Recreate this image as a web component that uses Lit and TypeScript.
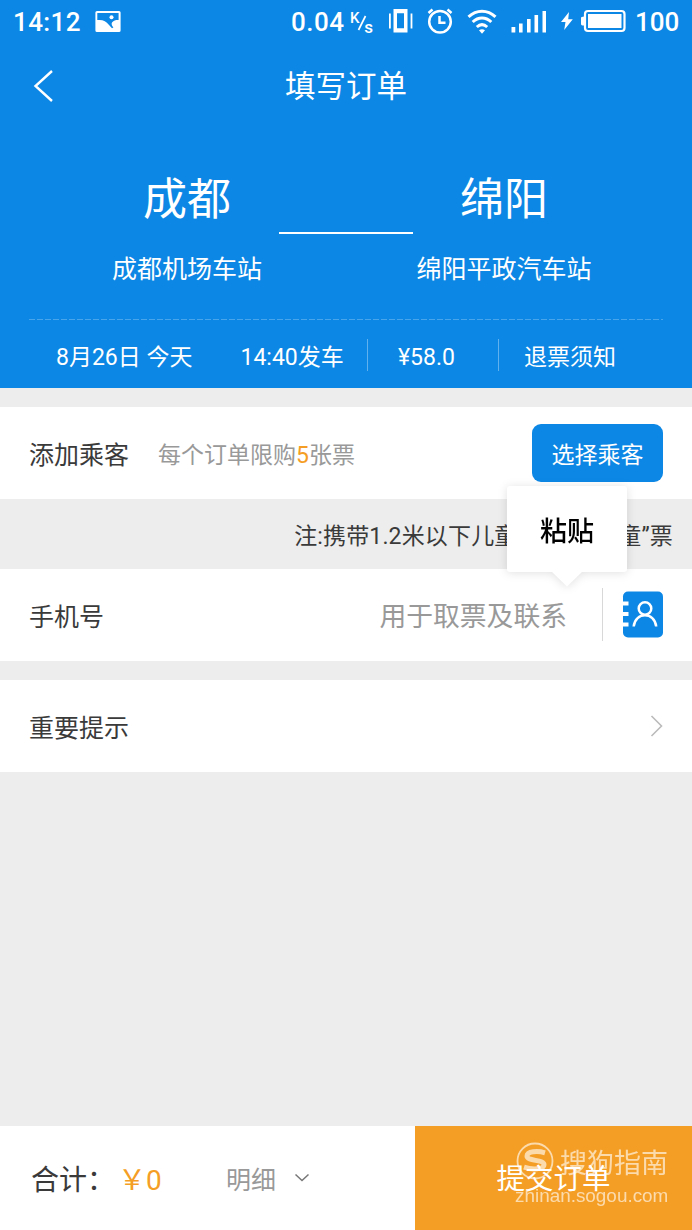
import { LitElement, html, css } from "lit";
import { customElement } from "lit/decorators.js";

@customElement("status-bar")
class StatusBar extends LitElement {
  static styles = css`
    :host { display: flex; align-items: center; height: 43px; padding: 0 13px; color: #fff; font-size: 26px; font-weight: 500; line-height: 30px; }
    svg { display: block; flex: none; }
    .clock { width: 82px; letter-spacing: 0.4px; white-space: nowrap; }
    .rate { margin-left: auto; width: 57px; letter-spacing: 0.5px; white-space: nowrap; }
    .unit { margin-right: 12px; }
    .vibrate { margin-right: 14px; margin-top: -1px; }
    .alarm { margin-right: 14px; margin-top: -2px; }
    .wifi { margin-right: 14px; margin-top: -2px; }
    .signal { margin-right: 13px; margin-top: -2px; }
    .bolt { margin-right: 7px; margin-top: -1px; }
    .battery { margin-top: -1px; }
    .level { width: 44px; margin-left: 9px; white-space: nowrap; }
    .small { font-size: 15px; font-weight: 500; fill: #fff; }
    .second { font-size: 17px; }
  `;
  render() {
    return html`
      <span class="clock">14:12</span>
      <svg width="26" height="22" viewBox="0 0 26 22">
        <path fill="#fff" fill-rule="evenodd" d="M2 0h22a1.600 1.600 0 0 1 1.600 1.600v17.800a1.600 1.600 0 0 1-1.600 1.600H2a1.600 1.600 0 0 1-1.600-1.600V1.600A1.600 1.600 0 0 1 2 0zM2.300 1.900v7.200c5.500-.8 8.700 1.400 11.500 4.600l3.200 3.500 1.400-.8c-1.800-2-2.300-3.900-1.200-5.100 1.500-1.700 3.600-2.300 6.400-2.200V1.900z"/>
        <circle cx="16.500" cy="6.200" r="2" fill="#fff"/>
      </svg>
      <span class="rate">0.04</span>
      <svg class="unit" width="28" height="30" viewBox="-2 -3 28 30">
        <text class="small" x="0" y="12.500">K</text>
        <path d="M8.500 20 15.500 6" stroke="#fff" stroke-width="1.700"/>
        <text class="small second" x="14.300" y="22.500">s</text>
      </svg>
      <svg class="vibrate" width="25" height="26" viewBox="0 0 25 26">
        <path fill="#fff" fill-rule="evenodd" d="M5.500 1h14v23.500h-14zM9 5.200v15h7v-15z"/>
        <path stroke="#fff" stroke-width="1.800" d="M1.900 5.500v15M23.500 5.500v15"/>
      </svg>
      <svg class="alarm" width="26" height="26" viewBox="0 0 26 26" fill="none" stroke="#fff" stroke-width="2.500">
        <circle cx="13" cy="13.700" r="10.800"/>
        <path d="M12.500 8v6.800h6M1.500 5 5.500 1.500M24.500 5l-4-3.500"/>
      </svg>
      <svg class="wifi" width="30" height="26" viewBox="0 0 30 26" fill="none" stroke="#fff" stroke-width="3">
        <path d="M1.500 8.800c8-7.500 19-7.500 27 0M5.700 14c5.600-5.300 13-5.300 18.600 0M9.800 19c3.200-2.900 7.200-2.900 10.400 0"/>
        <path d="M12 22.200q3-2 6 0l-3 3.500z" fill="#fff" stroke="none"/>
      </svg>
      <svg class="signal" width="36" height="24" viewBox="0 0 36 24" fill="#fff">
        <path d="M.5 18h3.800v5.500H.5zM8 14.500h3.600v9H8zM16 10h3.600v13.500H16zM23.500 6h3.600v17.500h-3.600zM31.500 2H35v21.500h-3.500z"/>
      </svg>
      <svg class="bolt" width="14" height="20" viewBox="0 0 14 20"><path fill="#fff" d="M9 1 1 11h4.500L4.200 19 12.800 8.300H8.200z"/></svg>
      <svg class="battery" width="45" height="24" viewBox="0 0 45 24">
        <rect x="4" y="2" width="39.500" height="20" rx="3" fill="none" stroke="#fff" stroke-width="2.200"/>
        <path fill="#fff" d="M0 9q0-1.500 3-1.500v9Q0 16.500 0 15zM7 5h33.500v14H7z"/>
      </svg>
      <span class="level">100</span>
    `;
  }
}

@customElement("trip-header")
class TripHeader extends LitElement {
  static styles = css`
    :host { display: block; height: 345px; color: #fff; }
    svg { display: block; }
    .nav { display: grid; grid-template-columns: 60px 1fr 60px; align-items: center; height: 85px; }
    .back { margin-left: 33px; }
    .title { font-size: 30.5px; line-height: 40px; text-align: center; padding-top: 3px; }
    .route { display: grid; grid-template-columns: 96px 182px 135px 182px; height: 191px; grid-template-rows: 106px 44px; padding-top: 24px; box-sizing: border-box; }
    .city { font-size: 44px; line-height: 97px; text-align: center; white-space: nowrap; }
    .from { grid-column: 2; }
    .to { grid-column: 4; }
    .link { grid-column: 3; height: 2px; background: #fff; margin: 80px 0 0 1px; }
    .station { font-size: 25px; line-height: 24px; text-align: center; white-space: nowrap; }
    .info { display: grid; grid-template-columns: 339px 131px 163px; margin: 0 29px; height: 69px; align-items: center; font-size: 23px; }
    .dash { display: block; margin: 0 29px; }
    .cell { height: 32px; line-height: 37px; padding-left: 27px; border-right: 1px solid rgba(255,255,255,.35); white-space: nowrap; }
    .price { padding-left: 30px; }
    .cell.last { border: 0; padding-left: 25px; }
    .time { margin-left: 48px; }
  `;
  render() {
    return html`
      <div class="nav">
        <svg class="back" width="21" height="34" viewBox="0 0 21 34"><path d="M19 2 2.500 17 19 32" fill="none" stroke="#fff" stroke-width="2.400"/></svg>
        <div class="title">填写订单</div>
      </div>
      <div class="route">
        <div class="city from">成都</div>
        <div class="link"></div>
        <div class="city to">绵阳</div>
        <div class="station from">成都机场车站</div>
        <div class="station to">绵阳平政汽车站</div>
      </div>
      <svg class="dash" width="634" height="1"><path d="M0 .5h634" stroke="#fff" stroke-opacity=".25" stroke-dasharray="6 2"/></svg>
      <div class="info">
        <div class="cell">8月26日 今天<span class="time">14:40发车</span></div>
        <div class="cell price">¥58.0</div>
        <div class="cell last">退票须知</div>
      </div>
    `;
  }
}

@customElement("order-footer")
class OrderFooter extends LitElement {
  static styles = css`
    :host { display: flex; height: 104px; background: #fff; }
    .sum { display: flex; width: 415px; align-items: center; box-sizing: border-box; padding-left: 31px; white-space: nowrap; }
    .total { width: 87px; font-size: 28px; color: #3a3a3a; }
    .amount { width: 108px; font-size: 28px; color: #f59e25; }
    .detail { font-size: 25px; color: #999; margin-right: 18px; }
    .submit { position: relative; flex: 1; background: #f59e25; color: #fff; font-size: 28.500px; line-height: 108px; text-align: center; }
    .mark { position: absolute; left: 100px; top: 15px; opacity: .62; display: grid; grid-template-columns: 45px 108px; height: 66px; color: #fff; line-height: 1; text-align: left; }
    .brand { font-size: 27px; line-height: 47px; white-space: nowrap; }
    .site { grid-column: 1 / 3; font-family: "Liberation Sans", sans-serif; font-size: 18.900px; line-height: 20px; white-space: nowrap; margin-top: -3px; }
  `;
  render() {
    return html`
      <div class="sum">
        <span class="total">合计：</span><span class="amount">￥0</span><span class="detail">明细</span>
        <svg width="16" height="10" viewBox="0 0 16 10"><path d="m1.500 1.500 6.500 6 6.500-6" fill="none" stroke="#777" stroke-width="1.500"/></svg>
      </div>
      <div class="submit">提交订单
        <div class="mark">
          <svg width="40" height="40" viewBox="0 0 40 40" fill="none" stroke="#fff">
            <circle cx="20" cy="20" r="17.500" stroke-width="1.800"/>
            <path stroke-width="5" d="M30 11.800c-7-2-18-1.700-18 3.200 0 5.500 17 3.300 17 8.800 0 5-12 5-20 2.400"/>
          </svg>
          <span class="brand">搜狗指南</span>
          <span class="site">zhinan.sogou.com</span>
        </div>
      </div>
    `;
  }
}

@customElement("app-root")
class AppRoot extends LitElement {
  static styles = css`
    :host { display: flex; flex-direction: column; width: 692px; height: 1230px; overflow: hidden; background: #ededed; color: #3a3a3a; font-family: Roboto, "Noto Sans CJK SC", sans-serif; font-weight: 400; }
    .top { height: 388px; flex: none; background: #0d87e5; }
    .row { display: flex; align-items: center; flex: none; height: 92px; box-sizing: border-box; padding: 0 29px 1px; background: #fff; font-size: 25px; white-space: nowrap; }
    .passengers { margin-top: 19px; }
    .limit { margin-left: 29px; font-size: 23px; color: #999; }
    .count { color: #f59e25; }
    .choose { margin-left: auto; width: 131px; height: 58px; border-radius: 9px; background: #0d87e5; color: #fff; font-size: 23px; line-height: 63px; text-align: center; }
    .note { height: 70px; flex: none; font-size: 23px; line-height: 75px; text-align: right; padding-right: 19px; white-space: nowrap; letter-spacing: 0.15px; }
    .phone { position: relative; }
    .hint { margin-left: auto; font-size: 26.800px; color: #999; }
    .rule { width: 1px; height: 53px; margin: 0 19px 0 35px; background: #d8d8d8; }
    .tips { margin-top: 19px; justify-content: space-between; }
    .paste { position: absolute; left: 507px; top: -83px; width: 120px; height: 86px; border-radius: 3px; filter: drop-shadow(0 1px 5px rgba(0,0,0,.12)); background: #fff; color: #000; font-size: 27px; font-weight: 500; line-height: 92px; text-align: center; }
    .tail { position: absolute; left: 44px; top: 85px; }
    .spacer { flex: 1; }
  `;
  render() {
    return html`
      <div class="top"><status-bar></status-bar><trip-header></trip-header></div>
      <div class="row passengers">
        <span>添加乘客</span>
        <span class="limit">每个订单限购<span class="count">5</span>张票</span>
        <div class="choose">选择乘客</div>
      </div>
      <div class="note">注:携带1.2米以下儿童请购买“儿童”票</div>
      <div class="row phone">
        <span>手机号</span>
        <span class="hint">用于取票及联系</span>
        <div class="rule"></div>
        <svg width="41" height="47" viewBox="0 0 41 47">
          <rect x="1" y=".5" width="40" height="46" rx="5" fill="#0d87e5"/>
          <path d="M0 12.500h6.500M0 23h6.500M0 33.500h6.500" stroke="#fff" stroke-width="4"/>
          <g fill="none" stroke="#fff" stroke-width="2.500"><circle cx="23" cy="17.500" r="6.300"/><path d="M11.700 35.500c1.500-15 21-15 22.500 0"/></g>
        </svg>
        <div class="paste">粘贴
          <svg class="tail" width="32" height="16" viewBox="0 0 32 16"><path d="M0 0h32L16 15.500z" fill="#fff"/></svg>
        </div>
      </div>
      <div class="row tips">
        <span>重要提示</span>
        <svg width="13" height="22" viewBox="0 0 13 22"><path d="m1.500 1 10 10-10 10" fill="none" stroke="#bbb" stroke-width="1.600"/></svg>
      </div>
      <div class="spacer"></div>
      <order-footer></order-footer>
    `;
  }
}
